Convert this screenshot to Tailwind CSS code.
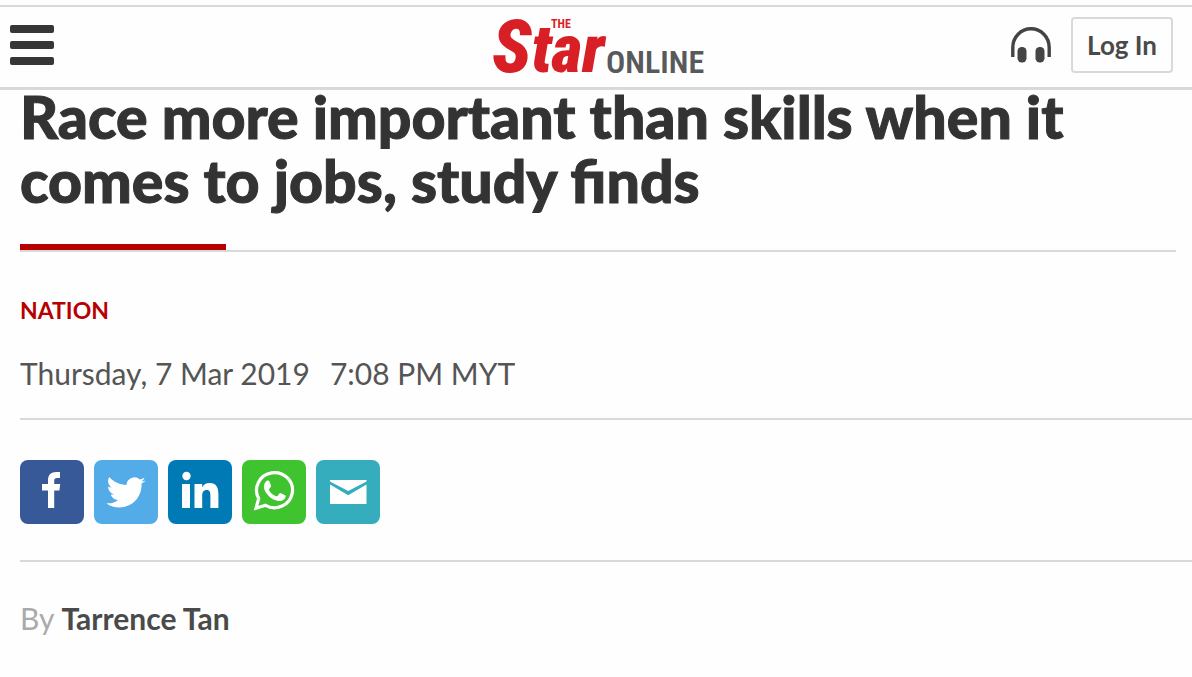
<!DOCTYPE html>
<html lang="en">
  <head>
    <meta charset="UTF-8" />
    <meta name="viewport" content="width=device-width, initial-scale=1.0" />
    <title>Race more important than skills when it comes to jobs, study finds</title>
    <script src="https://cdn.jsdelivr.net/npm/@tailwindcss/browser@4"></script>
  </head>
  <body class="bg-[#fefefe] font-['Lato',sans-serif] text-[#333]">
    <!-- Header -->
    <header class="mt-[5px] grid grid-cols-[1fr_auto_1fr] items-center h-[85px] border-t-2 border-b-3 border-[#d9d9d9] pl-[10px] pr-[19px]">
      <button type="button" aria-label="Menu" class="flex flex-col gap-2 w-11 pb-1">
        <span class="h-2 w-full rounded-xs bg-[#363636]"></span>
        <span class="h-2 w-full rounded-xs bg-[#363636]"></span>
        <span class="h-2 w-full rounded-xs bg-[#363636]"></span>
      </button>

      <a href="#" aria-label="The Star Online">
        <svg width="230" height="72" viewBox="0 0 230 72" class="block font-['Roboto_Condensed','Lato',sans-serif]">
          <text x="15" y="61" font-style="italic" font-weight="900" fill="#d91f26"><tspan font-size="74">S</tspan><tspan font-size="67">tar</tspan></text>
          <text x="74" y="17" font-size="12" font-weight="700" fill="#d91f26">THE</text>
          <text x="129" y="62" font-size="32" font-weight="600" fill="#58595b">ONLINE</text>
        </svg>
      </a>

      <div class="flex items-center justify-end gap-5 pb-1">
        <button type="button" aria-label="Listen">
          <svg width="40" height="36" viewBox="0 0 40 36" class="block">
            <path d="M1.800 30V20.500a18.200 18.700 0 0 1 36.400 0V30" fill="none" stroke="#444" stroke-width="3.400" />
            <rect x="6.500" y="20" width="9" height="15.500" rx="4.200" fill="#444" />
            <rect x="24.500" y="20" width="9" height="15.500" rx="4.200" fill="#444" />
          </svg>
        </button>
        <button type="button" class="h-14 rounded-sm border-2 border-[#d9d9d9] px-[14px] text-[26px] font-bold text-[#4a4a4a]">Log In</button>
      </div>
    </header>

    <!-- Article -->
    <main class="pl-5">
      <h1 class="-mt-[5px] pr-4 text-[59px] leading-16 font-black [-webkit-text-stroke:1px_#333]">
        Race more important than skills when it comes to jobs, study finds
      </h1>
      <div class="mt-[31px] mr-4 border-b-2 border-[#d9d9d9]">
        <div class="h-[6px] w-[206px] bg-[#b70000]"></div>
      </div>

      <a href="#" class="mt-[42px] block text-[23px] leading-8 font-bold text-[#b70000]">NATION</a>
      <p class="mt-[27px] flex gap-5 border-b-2 border-[#d9d9d9] pb-[25px] text-[30px] leading-10 text-[#555]">
        <span>Thursday, 7 Mar 2019</span>
        <time>7:08 PM MYT</time>
      </p>

      <!-- Share buttons -->
      <div class="flex gap-[10px] border-b-2 border-[#d9d9d9] pt-10 pb-9">
        <a href="#" aria-label="Facebook" class="size-16 rounded-lg bg-[#375997]">
          <svg viewBox="0 0 64 64" fill="#fff"><path d="M28 48V30.500h-6V24h6v-3.500C28 14.800 31 12 36.300 12H40v6h-2.600c-2.600 0-3.200 1-3.200 3.200V24h6l-.8 6.500h-5.200V48z" /></svg>
        </a>
        <a href="#" aria-label="Twitter" class="size-16 rounded-lg bg-[#53abe8]">
          <svg viewBox="0 0 64 64" fill="#fff"><path d="M51.500 20.500c-1.400.6-2.600 1-4.200 1.100 1.600-1 2.500-2 3.300-4-1.500.9-3 1.500-4.800 1.900A7.900 7.900 0 0 0 32.500 25C26 24.800 19.700 22 15.200 17c-2.200 3.800-1 8 2.400 10.500-1.300 0-2.400-.4-3.500-1 0 4 2.500 7 6.200 7.800-1.200.3-2.300.3-3.500.1 1 3.100 3.800 5.400 7.200 5.500-3.300 2.600-6.300 3.700-11.600 3.300 3.500 2.900 8.500 4.300 12.900 4.300 13.500 0 22.300-10.900 22.300-22.700v-1.300c1.600-1.100 2.800-1.400 3.900-3z" /></svg>
        </a>
        <a href="#" aria-label="LinkedIn" class="size-16 rounded-lg bg-[#007ab5]">
          <svg viewBox="0 0 64 64" fill="#fff"><circle cx="18.500" cy="16" r="4.200" /><path d="M14 24h8v24h-8zM26.500 24h7.700v3.300c1.400-2.700 4-4.200 7.300-4.200 7 0 8.900 4.600 8.900 11.300V48h-8V35.800c0-3.200-.4-5.700-3.700-5.700s-4.500 2.400-4.500 5.500V48h-7.700z" /></svg>
        </a>
        <a href="#" aria-label="WhatsApp" class="size-16 rounded-lg bg-[#3fc42f]">
          <svg viewBox="0 0 64 64" fill="#fff"><path d="M14 48.200 16.700 38.500a18 17.500 0 1 1 6.800 6.800z" fill="none" stroke="#fff" stroke-width="3.200" stroke-linejoin="miter" /><path d="M25.800 20.500c.8 0 1.200.2 1.600 1l1.500 3.700c.3.700.2 1.200-.2 1.800l-1.500 2c-.4.500-.3.900 0 1.400 1.600 2.700 4 4.600 6.900 5.800.6.200 1 .2 1.400-.3l1.900-2.300c.4-.6.900-.6 1.500-.3l4 1.900c.7.300.9.700.7 1.600-.3 2.300-3.400 4.400-6 4.300-6.500-.7-11.600-4.600-14.600-10.200-1.800-3.500-1.400-6.600 1-9.300.5-.7 1-1.100 1.800-1.100z" /></svg>
        </a>
        <a href="#" aria-label="Email" class="size-16 rounded-lg bg-[#35adbd]">
          <svg viewBox="0 0 64 64" fill="#fff"><path d="M14 20h36.500v1.500L32.200 31 14 21.500zM14 24.500l18.200 10.700 18.300-10.700V44H14z" /></svg>
        </a>
      </div>

      <p class="mt-[34px] text-[30px] leading-11 text-[#aaa]">
        By <a href="#" class="font-bold text-[#4a4a4a]">Tarrence Tan</a>
      </p>
    </main>
  </body>
</html>
